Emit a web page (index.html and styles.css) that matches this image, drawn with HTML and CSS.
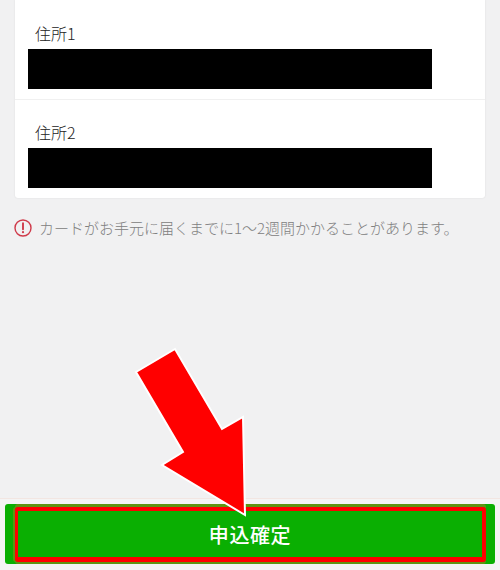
FILE: index.html
```html
<!DOCTYPE html>
<html lang="ja">
<head>
    <meta charset="UTF-8">
    <meta name="viewport" content="width=device-width, initial-scale=1.0">
    <title>申込確定</title>
    <link rel="stylesheet" href="styles.css">
</head>
<body>

    <div class="page">
        <div class="card">
            <div class="row">
                <div class="label">住所1</div>
                <div class="redacted"></div>
            </div>
            <div class="row">
                <div class="label">住所2</div>
                <div class="redacted"></div>
            </div>
        </div>

        <div class="note">
            <svg class="note-icon" viewBox="0 0 18 18" width="18" height="18">
                <circle cx="9" cy="9" r="8" fill="none" stroke="#cf3a4a" stroke-width="1.4"/>
                <path d="M9 4.2v6" stroke="#cf3a4a" stroke-width="1.9" stroke-linecap="round"/>
                <circle cx="9" cy="13.2" r="1.1" fill="#cf3a4a"/>
            </svg>
            <span>カードがお手元に届くまでに1〜2週間かかることがあります。</span>
        </div>

        <div class="footer">
            <button class="submit"><span class="submit-inner">申込確定</span></button>
        </div>

        <svg class="arrow" viewBox="0 0 500 570" width="500" height="570">
            <polygon points="175,349 136,372 183,452 162,465 245,515 243,417 222,429" fill="#ff0000" stroke="#ffffff" stroke-width="2"/>
        </svg>
    </div>

</body>
</html>
```

FILE: styles.css
```css
body {
    font-family: "Noto Sans CJK JP", "Liberation Sans", sans-serif;
    background-color: #f1f1f2;
    margin: 0;
}

.page {
    position: relative;
    display: flex;
    flex-direction: column;
    height: 570px;
    overflow: hidden;
}

.card {
    background-color: #fff;
    margin: 0 15px;
    height: 198px;
    border-radius: 0 0 3px 3px;
    box-shadow: 0 0 2px rgba(0, 0, 0, 0.1);
}

.row {
    height: 100px;
    padding: 21px 53px 0 13px;
    box-sizing: border-box;
    border-bottom: 1px solid #f0f0f0;
}

.row:last-child {
    height: 98px;
    padding-top: 20px;
    border-bottom: none;
}

.label {
    font-size: 16px;
    font-weight: 300;
    line-height: 25px;
    height: 28px;
    padding-left: 7px;
    color: #222;
}

.redacted {
    background-color: #000;
    height: 40px;
}

.note {
    display: flex;
    align-items: center;
    gap: 7px;
    margin: 21px 0 0 14px;
    font-size: 15px;
    font-weight: 300;
    line-height: 18px;
    color: #808080;
    white-space: nowrap;
}

.note-icon {
    flex-shrink: 0;
}

.footer {
    margin-top: auto;
    height: 72px;
    padding: 5px 5px 6px;
    box-sizing: border-box;
    background-color: #f4f4f4;
    border-top: 1px solid #f2e6e2;
}

.submit {
    display: block;
    width: 100%;
    height: 60px;
    padding: 3px 9px 2px 10px;
    border: none;
    border-radius: 3px;
    background-color: #0aaf02;
    font-family: inherit;
}

.submit-inner {
    display: flex;
    align-items: center;
    justify-content: center;
    box-sizing: border-box;
    height: 55px;
    border: 4px solid #ff0000;
    border-left-width: 3px;
    border-bottom-width: 5px;
    border-radius: 3px;
    box-shadow: 0 -3px 0 #5f9412, 0 2px 0 #5f9412, -2px 0 0 #5f9412;
    font-size: 20px;
    font-weight: 500;
    letter-spacing: 0.6px;
    color: #fff;
}

.arrow {
    position: absolute;
    top: 0;
    left: 0;
    pointer-events: none;
}
```
